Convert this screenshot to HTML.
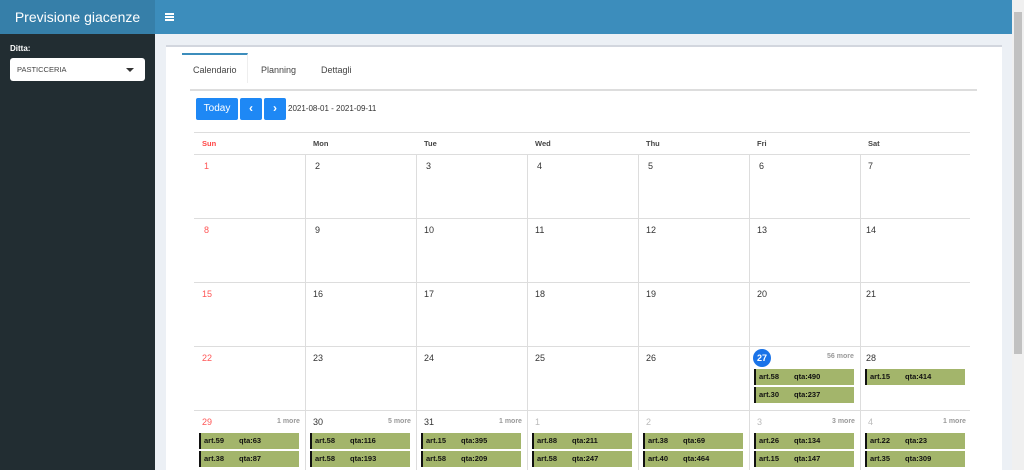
<!DOCTYPE html>
<html><head><meta charset="utf-8"><style>
*{margin:0;padding:0;box-sizing:border-box}
body{width:1024px;height:470px;overflow:hidden;background:#ecf0f5;font-family:"Liberation Sans",sans-serif;position:relative}
.a{position:absolute}
.d{position:absolute;font-size:9px;color:#333}
.m{position:absolute;font-size:7px;color:#999;font-weight:bold}
.e{position:absolute;width:100px;height:16px;background:#a3b56b;border-left:2px solid #111;font-size:7.5px;font-weight:bold;color:#111;line-height:16px}
.e span{position:absolute;left:38px}
.e b{position:absolute;left:3px}
.vl{position:absolute;width:1px;background:#ddd;top:154px;height:316px}
.hl{position:absolute;left:194px;width:776px;height:1px;background:#ddd}
.h{position:absolute;top:139px;font-size:7.5px;font-weight:bold;color:#444}
</style></head><body>
<div class="a" style="left:0;top:0;width:155px;height:34px;background:#367fa9;color:#fff;font-size:14px;line-height:34px;text-align:center">Previsione giacenze</div>
<div class="a" style="left:155px;top:0;width:857px;height:34px;background:#3c8dbc"></div>
<div class="a" style="left:165px;top:13px;width:9px;height:2px;background:#fff;box-shadow:0 3px 0 #fff,0 6px 0 #fff"></div>
<div class="a" style="left:0;top:34px;width:155px;height:436px;background:#222d32"></div>
<div class="a" style="left:10px;top:44px;color:#fff;font-size:8px;font-weight:bold">Ditta:</div>
<div class="a" style="left:10px;top:58px;width:135px;height:23px;background:#fff;border-radius:3px;font-size:7.5px;color:#444;line-height:23px;padding-left:7px">PASTICCERIA</div>
<div class="a" style="left:126px;top:68px;width:0;height:0;border-left:4px solid transparent;border-right:4px solid transparent;border-top:4px solid #333"></div>
<div class="a" style="left:1012px;top:0;width:12px;height:470px;background:#f0f0f0"></div>
<div class="a" style="left:1014px;top:12px;width:8px;height:342px;background:#c1c1c1"></div>
<div class="a" style="left:166px;top:45px;width:836px;height:425px;background:#fff;border-top:2px solid #d2d6de"></div>
<div class="a" style="left:182px;top:53px;width:66px;height:30px;border-top:2px solid #3c8dbc;border-right:1px solid #eee;background:#fff"></div>
<div class="a" style="left:193px;top:65px;font-size:9px;color:#444">Calendario</div>
<div class="a" style="left:261px;top:65px;font-size:9px;color:#444">Planning</div>
<div class="a" style="left:321px;top:65px;font-size:9px;color:#444">Dettagli</div>
<div class="a" style="left:190px;top:89px;width:787px;height:2px;background:#ddd"></div>
<div class="a" style="left:196px;top:98px;width:42px;height:22px;background:#1e88f5;border-radius:2px;color:#fff;font-size:10px;line-height:22px;text-align:center">Today</div>
<div class="a" style="left:240px;top:98px;width:22px;height:22px;background:#1e88f5;border-radius:2px;color:#fff;font-size:12px;line-height:21px;text-align:center;font-weight:bold">&lsaquo;</div>
<div class="a" style="left:264px;top:98px;width:22px;height:22px;background:#1e88f5;border-radius:2px;color:#fff;font-size:12px;line-height:21px;text-align:center;font-weight:bold">&rsaquo;</div>
<div class="a" style="left:288px;top:104px;font-size:8px;color:#333">2021-08-01 - 2021-09-11</div>
<div class="hl" style="top:132px"></div><div class="hl" style="top:154px"></div>
<div class="hl" style="top:218px"></div><div class="hl" style="top:282px"></div><div class="hl" style="top:346px"></div><div class="hl" style="top:410px"></div>
<div class="vl" style="left:305px"></div><div class="vl" style="left:416px"></div><div class="vl" style="left:527px"></div><div class="vl" style="left:638px"></div><div class="vl" style="left:749px"></div><div class="vl" style="left:860px"></div>
<div class="h" style="left:202px;color:#f44">Sun</div><div class="h" style="left:313px">Mon</div><div class="h" style="left:424px">Tue</div><div class="h" style="left:535px">Wed</div><div class="h" style="left:646px">Thu</div><div class="h" style="left:757px">Fri</div><div class="h" style="left:868px">Sat</div>
<div class="d" style="left:204px;top:161px;color:#f55">1</div><div class="d" style="left:315px;top:161px">2</div><div class="d" style="left:426px;top:161px">3</div><div class="d" style="left:537px;top:161px">4</div><div class="d" style="left:648px;top:161px">5</div><div class="d" style="left:759px;top:161px">6</div><div class="d" style="left:868px;top:161px">7</div>
<div class="d" style="left:204px;top:225px;color:#f55">8</div><div class="d" style="left:315px;top:225px">9</div><div class="d" style="left:424px;top:225px">10</div><div class="d" style="left:535px;top:225px">11</div><div class="d" style="left:646px;top:225px">12</div><div class="d" style="left:757px;top:225px">13</div><div class="d" style="left:866px;top:225px">14</div>
<div class="d" style="left:202px;top:289px;color:#f55">15</div><div class="d" style="left:313px;top:289px">16</div><div class="d" style="left:424px;top:289px">17</div><div class="d" style="left:535px;top:289px">18</div><div class="d" style="left:646px;top:289px">19</div><div class="d" style="left:757px;top:289px">20</div><div class="d" style="left:866px;top:289px">21</div>
<div class="d" style="left:202px;top:353px;color:#f55">22</div><div class="d" style="left:313px;top:353px">23</div><div class="d" style="left:424px;top:353px">24</div><div class="d" style="left:535px;top:353px">25</div><div class="d" style="left:646px;top:353px">26</div>
<div class="a" style="left:753px;top:349px;width:18px;height:18px;border-radius:50%;background:#1a73e8;color:#fff;font-size:9px;font-weight:bold;line-height:18px;text-align:center">27</div>
<div class="m" style="left:827px;top:353px">56 more</div>
<div class="d" style="left:866px;top:353px">28</div>
<div class="e" style="left:754px;top:369px"><b>art.58</b><span>qta:490</span></div>
<div class="e" style="left:754px;top:387px"><b>art.30</b><span>qta:237</span></div>
<div class="e" style="left:865px;top:369px"><b>art.15</b><span>qta:414</span></div>
<div class="d" style="left:202px;top:417px;color:#f55">29</div><div class="m" style="left:277px;top:418px">1 more</div>
<div class="d" style="left:313px;top:417px">30</div><div class="m" style="left:388px;top:418px">5 more</div>
<div class="d" style="left:424px;top:417px">31</div><div class="m" style="left:499px;top:418px">1 more</div>
<div class="d" style="left:535px;top:417px;color:#bbb">1</div>
<div class="d" style="left:646px;top:417px;color:#bbb">2</div>
<div class="d" style="left:757px;top:417px;color:#bbb">3</div><div class="m" style="left:832px;top:418px">3 more</div>
<div class="d" style="left:868px;top:417px;color:#bbb">4</div><div class="m" style="left:943px;top:418px">1 more</div>
<div class="e" style="left:199px;top:433px"><b>art.59</b><span>qta:63</span></div>
<div class="e" style="left:199px;top:451px"><b>art.38</b><span>qta:87</span></div>
<div class="e" style="left:310px;top:433px"><b>art.58</b><span>qta:116</span></div>
<div class="e" style="left:310px;top:451px"><b>art.58</b><span>qta:193</span></div>
<div class="e" style="left:421px;top:433px"><b>art.15</b><span>qta:395</span></div>
<div class="e" style="left:421px;top:451px"><b>art.58</b><span>qta:209</span></div>
<div class="e" style="left:532px;top:433px"><b>art.88</b><span>qta:211</span></div>
<div class="e" style="left:532px;top:451px"><b>art.58</b><span>qta:247</span></div>
<div class="e" style="left:643px;top:433px"><b>art.38</b><span>qta:69</span></div>
<div class="e" style="left:643px;top:451px"><b>art.40</b><span>qta:464</span></div>
<div class="e" style="left:754px;top:433px"><b>art.26</b><span>qta:134</span></div>
<div class="e" style="left:754px;top:451px"><b>art.15</b><span>qta:147</span></div>
<div class="e" style="left:865px;top:433px"><b>art.22</b><span>qta:23</span></div>
<div class="e" style="left:865px;top:451px"><b>art.35</b><span>qta:309</span></div>
</body></html>
